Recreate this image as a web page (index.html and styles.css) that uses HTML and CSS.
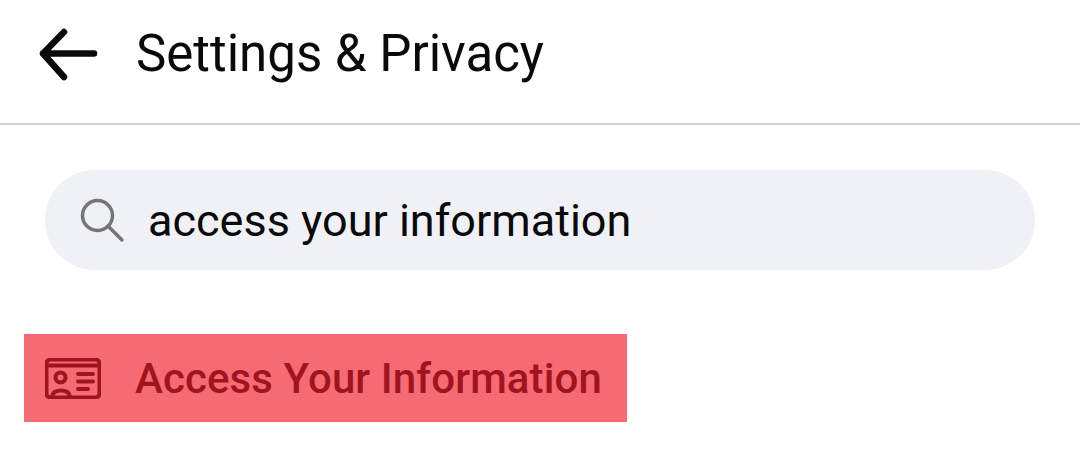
FILE: index.html
```html
<!DOCTYPE html>
<html lang="en">
  <head>
    <meta charset="UTF-8" />
    <title>Settings &amp; Privacy</title>
    <link rel="stylesheet" href="styles.css">
  </head>
  <body>
    <div class="header">
      <svg class="back-icon" width="60" height="54" viewBox="0 0 60 54">
        <path d="M5 26.500H56M26 5L5 26.500L26 50" />
      </svg>
      <h1>Settings &amp; Privacy</h1>
    </div>
    <div class="search-bar">
      <svg class="search-icon" width="46" height="46" viewBox="0 0 46 46">
        <circle cx="18.500" cy="18.500" r="15" />
        <path d="M29 29L43 43" />
      </svg>
      <span class="search-text">access your information</span>
    </div>
    <div class="result-row">
      <svg class="card-icon" width="56" height="41" viewBox="0 0 56 41">
        <rect x="1.500" y="1.500" width="53" height="38" rx="4" />
        <path d="M2 7.500H54M33 16H48M33 23.500H48M33 31H43" />
        <circle cx="15.500" cy="19.500" r="5" />
        <path d="M7 38C8 34 11 32.500 16 32.500C21 32.500 24 34 25 38" />
      </svg>
      <span class="result-text">Access Your Information</span>
    </div>
  </body>
</html>
```

FILE: styles.css
```css
* {
  margin: 0;
  padding: 0;
  box-sizing: border-box;
}

body {
  font-family: Roboto, "Liberation Sans", sans-serif;
  background: #ffffff;
  color: #0a0a0a;
  overflow: hidden;
}

.header {
  display: flex;
  align-items: center;
  height: 125px;
  padding: 0 0 16px 38px;
  border-bottom: 2px solid #d2d2d2;
}

.back-icon {
  fill: none;
  stroke: #0a0a0a;
  stroke-width: 6.500;
  stroke-linecap: round;
  stroke-linejoin: round;
}

h1 {
  font-size: 51px;
  font-weight: 400;
  margin-left: 38px;
}

.search-bar {
  display: flex;
  align-items: center;
  width: 990px;
  height: 100px;
  margin: 45px 0 64px 45px;
  padding-left: 34px;
  background: #f0f1f7;
  border-radius: 50px;
}

.search-icon {
  fill: none;
  stroke: #76767a;
  stroke-width: 3.500;
  stroke-linecap: round;
}

.search-text {
  font-size: 45px;
  margin-left: 23px;
}

.result-row {
  display: flex;
  align-items: center;
  width: 603px;
  height: 88px;
  margin-left: 24px;
  padding-left: 21px;
  background: #f56a73;
}

.card-icon {
  fill: none;
  stroke: #a0141f;
  stroke-width: 4;
  stroke-linecap: round;
}

.result-text {
  font-size: 42px;
  font-weight: 500;
  letter-spacing: 0.1px;
  color: #a0141f;
  margin-left: 34px;
}
```
